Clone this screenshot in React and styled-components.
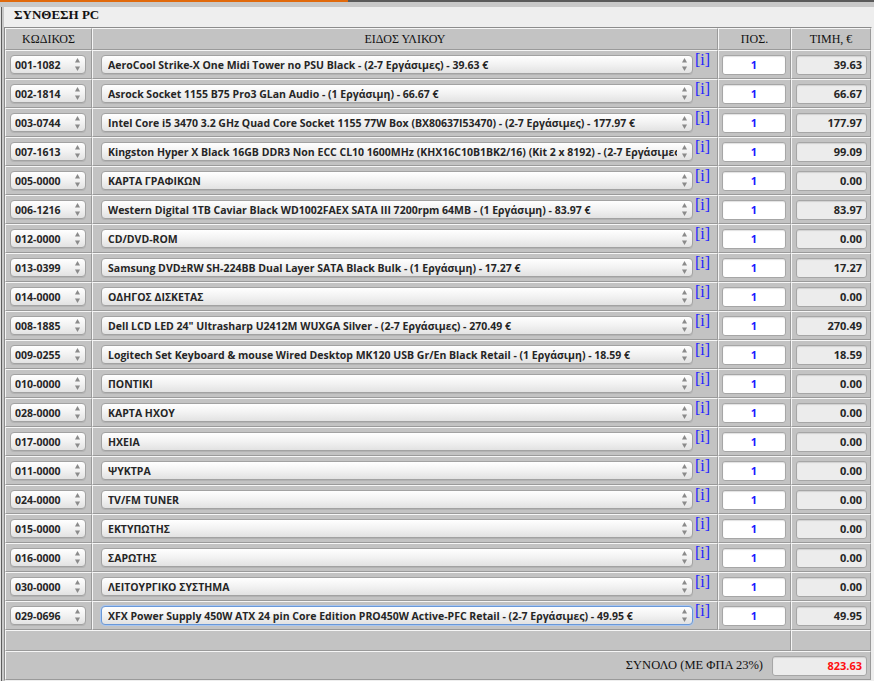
import React from 'react';
import styled, { createGlobalStyle } from 'styled-components';

const GlobalStyle = createGlobalStyle`
  html, body { margin: 0; padding: 0; background: #c8c8c8; }
  * { box-sizing: border-box; }
`;

const rows = [
  ['001-1082', 'AeroCool Strike-X One Midi Tower no PSU Black - (2-7 Εργάσιμες) - 39.63 €', '39.63'],
  ['002-1814', 'Asrock Socket 1155 B75 Pro3 GLan Audio - (1 Εργάσιμη) - 66.67 €', '66.67'],
  ['003-0744', 'Intel Core i5 3470 3.2 GHz Quad Core Socket 1155 77W Box (BX80637I53470) - (2-7 Εργάσιμες) - 177.97 €', '177.97'],
  ['007-1613', 'Kingston Hyper X Black 16GB DDR3 Non ECC CL10 1600MHz (KHX16C10B1BK2/16) (Kit 2 x 8192) - (2-7 Εργάσιμες) - 99.09 €', '99.09'],
  ['005-0000', 'ΚΑΡΤΑ ΓΡΑΦΙΚΩΝ', '0.00'],
  ['006-1216', 'Western Digital 1TB Caviar Black WD1002FAEX SATA III 7200rpm 64MB - (1 Εργάσιμη) - 83.97 €', '83.97'],
  ['012-0000', 'CD/DVD-ROM', '0.00'],
  ['013-0399', 'Samsung DVD±RW SH-224BB Dual Layer SATA Black Bulk - (1 Εργάσιμη) - 17.27 €', '17.27'],
  ['014-0000', 'ΟΔΗΓΟΣ ΔΙΣΚΕΤΑΣ', '0.00'],
  ['008-1885', 'Dell LCD LED 24" Ultrasharp U2412M WUXGA Silver - (2-7 Εργάσιμες) - 270.49 €', '270.49'],
  ['009-0255', 'Logitech Set Keyboard & mouse Wired Desktop MK120 USB Gr/En Black Retail - (1 Εργάσιμη) - 18.59 €', '18.59'],
  ['010-0000', 'ΠΟΝΤΙΚΙ', '0.00'],
  ['028-0000', 'ΚΑΡΤΑ ΗΧΟΥ', '0.00'],
  ['017-0000', 'ΗΧΕΙΑ', '0.00'],
  ['011-0000', 'ΨΥΚΤΡΑ', '0.00'],
  ['024-0000', 'TV/FM TUNER', '0.00'],
  ['015-0000', 'ΕΚΤΥΠΩΤΗΣ', '0.00'],
  ['016-0000', 'ΣΑΡΩΤΗΣ', '0.00'],
  ['030-0000', 'ΛΕΙΤΟΥΡΓΙΚΟ ΣΥΣΤΗΜΑ', '0.00'],
  ['029-0696', 'XFX Power Supply 450W ATX 24 pin Core Edition PRO450W Active-PFC Retail - (2-7 Εργάσιμες) - 49.95 €', '49.95'],
];

const Screen = styled.div`
  width: 874px;
  height: 681px;
  overflow: hidden;
  background: #c8c8c8;
`;

const TopStrip = styled.div`
  display: flex;
  height: 2px;
`;

const StripPart = styled.div`
  height: 2px;
  width: ${p => (p.$w ? `${p.$w}px` : 'auto')};
  flex: ${p => (p.$w ? 'none' : '1')};
  background: ${p => p.$c};
`;

const Frame = styled.div`
  display: flex;
  padding-top: 5px;
`;

const EdgeLine = styled.div`
  width: ${p => p.$w}px;
  background: ${p => p.$c};
  flex: none;
`;

const Panel = styled.div`
  flex: 1;
  background: #eeeeee;
`;

const Title = styled.div`
  height: 20px;
  padding: 0 0 4px 10px;
  display: flex;
  align-items: center;
  font-family: "Liberation Serif", serif;
  font-weight: bold;
  font-size: 13px;
  color: #111;
`;

const Table = styled.table`
  width: 868px;
  table-layout: fixed;
  border-collapse: separate;
  border-spacing: 0;
  border: 1px solid #8c8c8c;
  border-right-color: #eee;
  border-bottom-color: #eee;
  background: #c3c3c3;
`;

const Cell = styled.td`
  background: #c3c3c3;
  border-top: 1px solid #f6f6f6;
  border-left: 1px solid #f6f6f6;
  border-bottom: 1px solid #9a9a9a;
  border-right: 1px solid #9a9a9a;
  padding: 0 ${p => p.$pad || 0}px;
  height: ${p => p.$h || 29}px;
  vertical-align: middle;
  overflow: hidden;
`;

const HeadCell = styled(Cell)`
  font-family: "Liberation Serif", serif;
  font-size: 12px;
  color: #111;
  text-align: center;
`;

const SelectBox = styled.div`
  flex: none;
  display: flex;
  align-items: center;
  height: 19px;
  width: ${p => p.$w}px;
  min-width: 0;
  overflow: hidden;
  padding: 0 4px 0 ${p => p.$padL}px;
  border: 1px solid ${p => (p.$focus ? '#6a98d8' : '#a2a2a2')};
  border-radius: 4px;
  background: linear-gradient(#ffffff, #f2f2f2 50%, #e2e2e2);
  box-shadow: ${p => (p.$focus ? '0 0 0 1px #a9c6ef' : '0 1px 0 rgba(0,0,0,0.08)')};
  font-family: "Open Sans", "DejaVu Sans", sans-serif;
  font-weight: 700;
  font-size: 10.5px;
  color: #262626;
`;

const SelectText = styled.span`
  flex: 1;
  min-width: 0;
  overflow: hidden;
  white-space: nowrap;
`;

const Arrows = styled.svg`
  flex: none;
  margin-left: 4px;
`;

const ItemWrap = styled.div`
  display: flex;
  align-items: center;
`;

const InfoLink = styled.a`
  flex: none;
  align-self: flex-start;
  margin: -3px 0 0 2px;
  font-family: "Liberation Serif", serif;
  font-size: 16px;
  line-height: 15px;
  color: #2424ff;
  text-decoration: none;
`;

const NumBox = styled.div`
  flex: none;
  height: 20px;
  width: ${p => p.$w}px;
  margin-left: ${p => (p.$inline ? '0' : 'auto')};
  margin-right: ${p => p.$mr || 0}px;
  border: 1px solid #a6a6a6;
  border-radius: 3px;
  background: ${p => (p.$readonly ? '#ececec' : '#ffffff')};
  box-shadow: inset 0 1px 1px rgba(0,0,0,0.12);
  display: flex;
  align-items: center;
  justify-content: ${p => (p.$center ? 'center' : 'flex-end')};
  padding: 0 4px;
  font-family: "Open Sans", "DejaVu Sans", sans-serif;
  font-weight: 700;
  font-size: 11px;
  color: ${p => p.$color || '#262626'};
`;

const TotalWrap = styled.div`
  display: flex;
  align-items: center;
  justify-content: flex-end;
  gap: 9px;
  padding-right: 3px;
`;

const TotalLabel = styled.span`
  font-family: "Liberation Serif", serif;
  font-size: 12.5px;
  color: #111;
`;

function UpDown() {
  return (
    <Arrows width="7" height="15" viewBox="0 0 7 15">
      <path d="M3.5 1 L6 5.5 L1 5.5 Z" fill="#8a8a8a" />
      <path d="M3.5 14 L6 9.5 L1 9.5 Z" fill="#8a8a8a" />
    </Arrows>
  );
}

export default function App() {
  return (
    <Screen>
      <GlobalStyle />
      <TopStrip>
        <StripPart $w={348} $c="#e0690c" />
        <StripPart $c="#5a5a5a" />
      </TopStrip>
      <Frame>
        <EdgeLine $w={1} $c="#e2e2e2" />
        <EdgeLine $w={1} $c="#5e5e5e" />
        <EdgeLine $w={2} $c="#c8c8c8" />
        <Panel>
          <Title>ΣΥΝΘΕΣΗ PC</Title>
          <Table>
            <colgroup>
              <col style={{ width: 87 }} />
              <col style={{ width: 626 }} />
              <col style={{ width: 73 }} />
              <col style={{ width: 80 }} />
            </colgroup>
            <thead>
              <tr>
                <HeadCell $h={22}>ΚΩΔΙΚΟΣ</HeadCell>
                <HeadCell $h={22}>ΕΙΔΟΣ ΥΛΙΚΟΥ</HeadCell>
                <HeadCell $h={22}>ΠΟΣ.</HeadCell>
                <HeadCell $h={22}>ΤΙΜΗ, €</HeadCell>
              </tr>
            </thead>
            <tbody>
              {rows.map(([code, name, price], i) => (
                <tr key={code}>
                  <Cell $pad={4}>
                    <SelectBox $w={76} $padL={4}>
                      <SelectText>{code}</SelectText>
                      <UpDown />
                    </SelectBox>
                  </Cell>
                  <Cell $pad={8}>
                    <ItemWrap>
                      <SelectBox $w={592} $padL={6} $focus={i === rows.length - 1}>
                        <SelectText>{name}</SelectText>
                        <UpDown />
                      </SelectBox>
                      <InfoLink href="#">[i]</InfoLink>
                    </ItemWrap>
                  </Cell>
                  <Cell $pad={3}>
                    <NumBox $w={64} $center $color="#1a1aff" $mr={1}>1</NumBox>
                  </Cell>
                  <Cell $pad={3}>
                    <NumBox $w={71} $readonly>{price}</NumBox>
                  </Cell>
                </tr>
              ))}
              <tr>
                <Cell colSpan={3} $h={21} />
                <Cell $h={21} />
              </tr>
              <tr>
                <Cell colSpan={4} $h={29}>
                  <TotalWrap>
                    <TotalLabel>ΣΥΝΟΛΟ (ΜΕ ΦΠΑ 23%)</TotalLabel>
                    <NumBox $w={95} $inline $readonly $color="#ff1010">823.63</NumBox>
                  </TotalWrap>
                </Cell>
              </tr>
            </tbody>
          </Table>
        </Panel>
      </Frame>
    </Screen>
  );
}
